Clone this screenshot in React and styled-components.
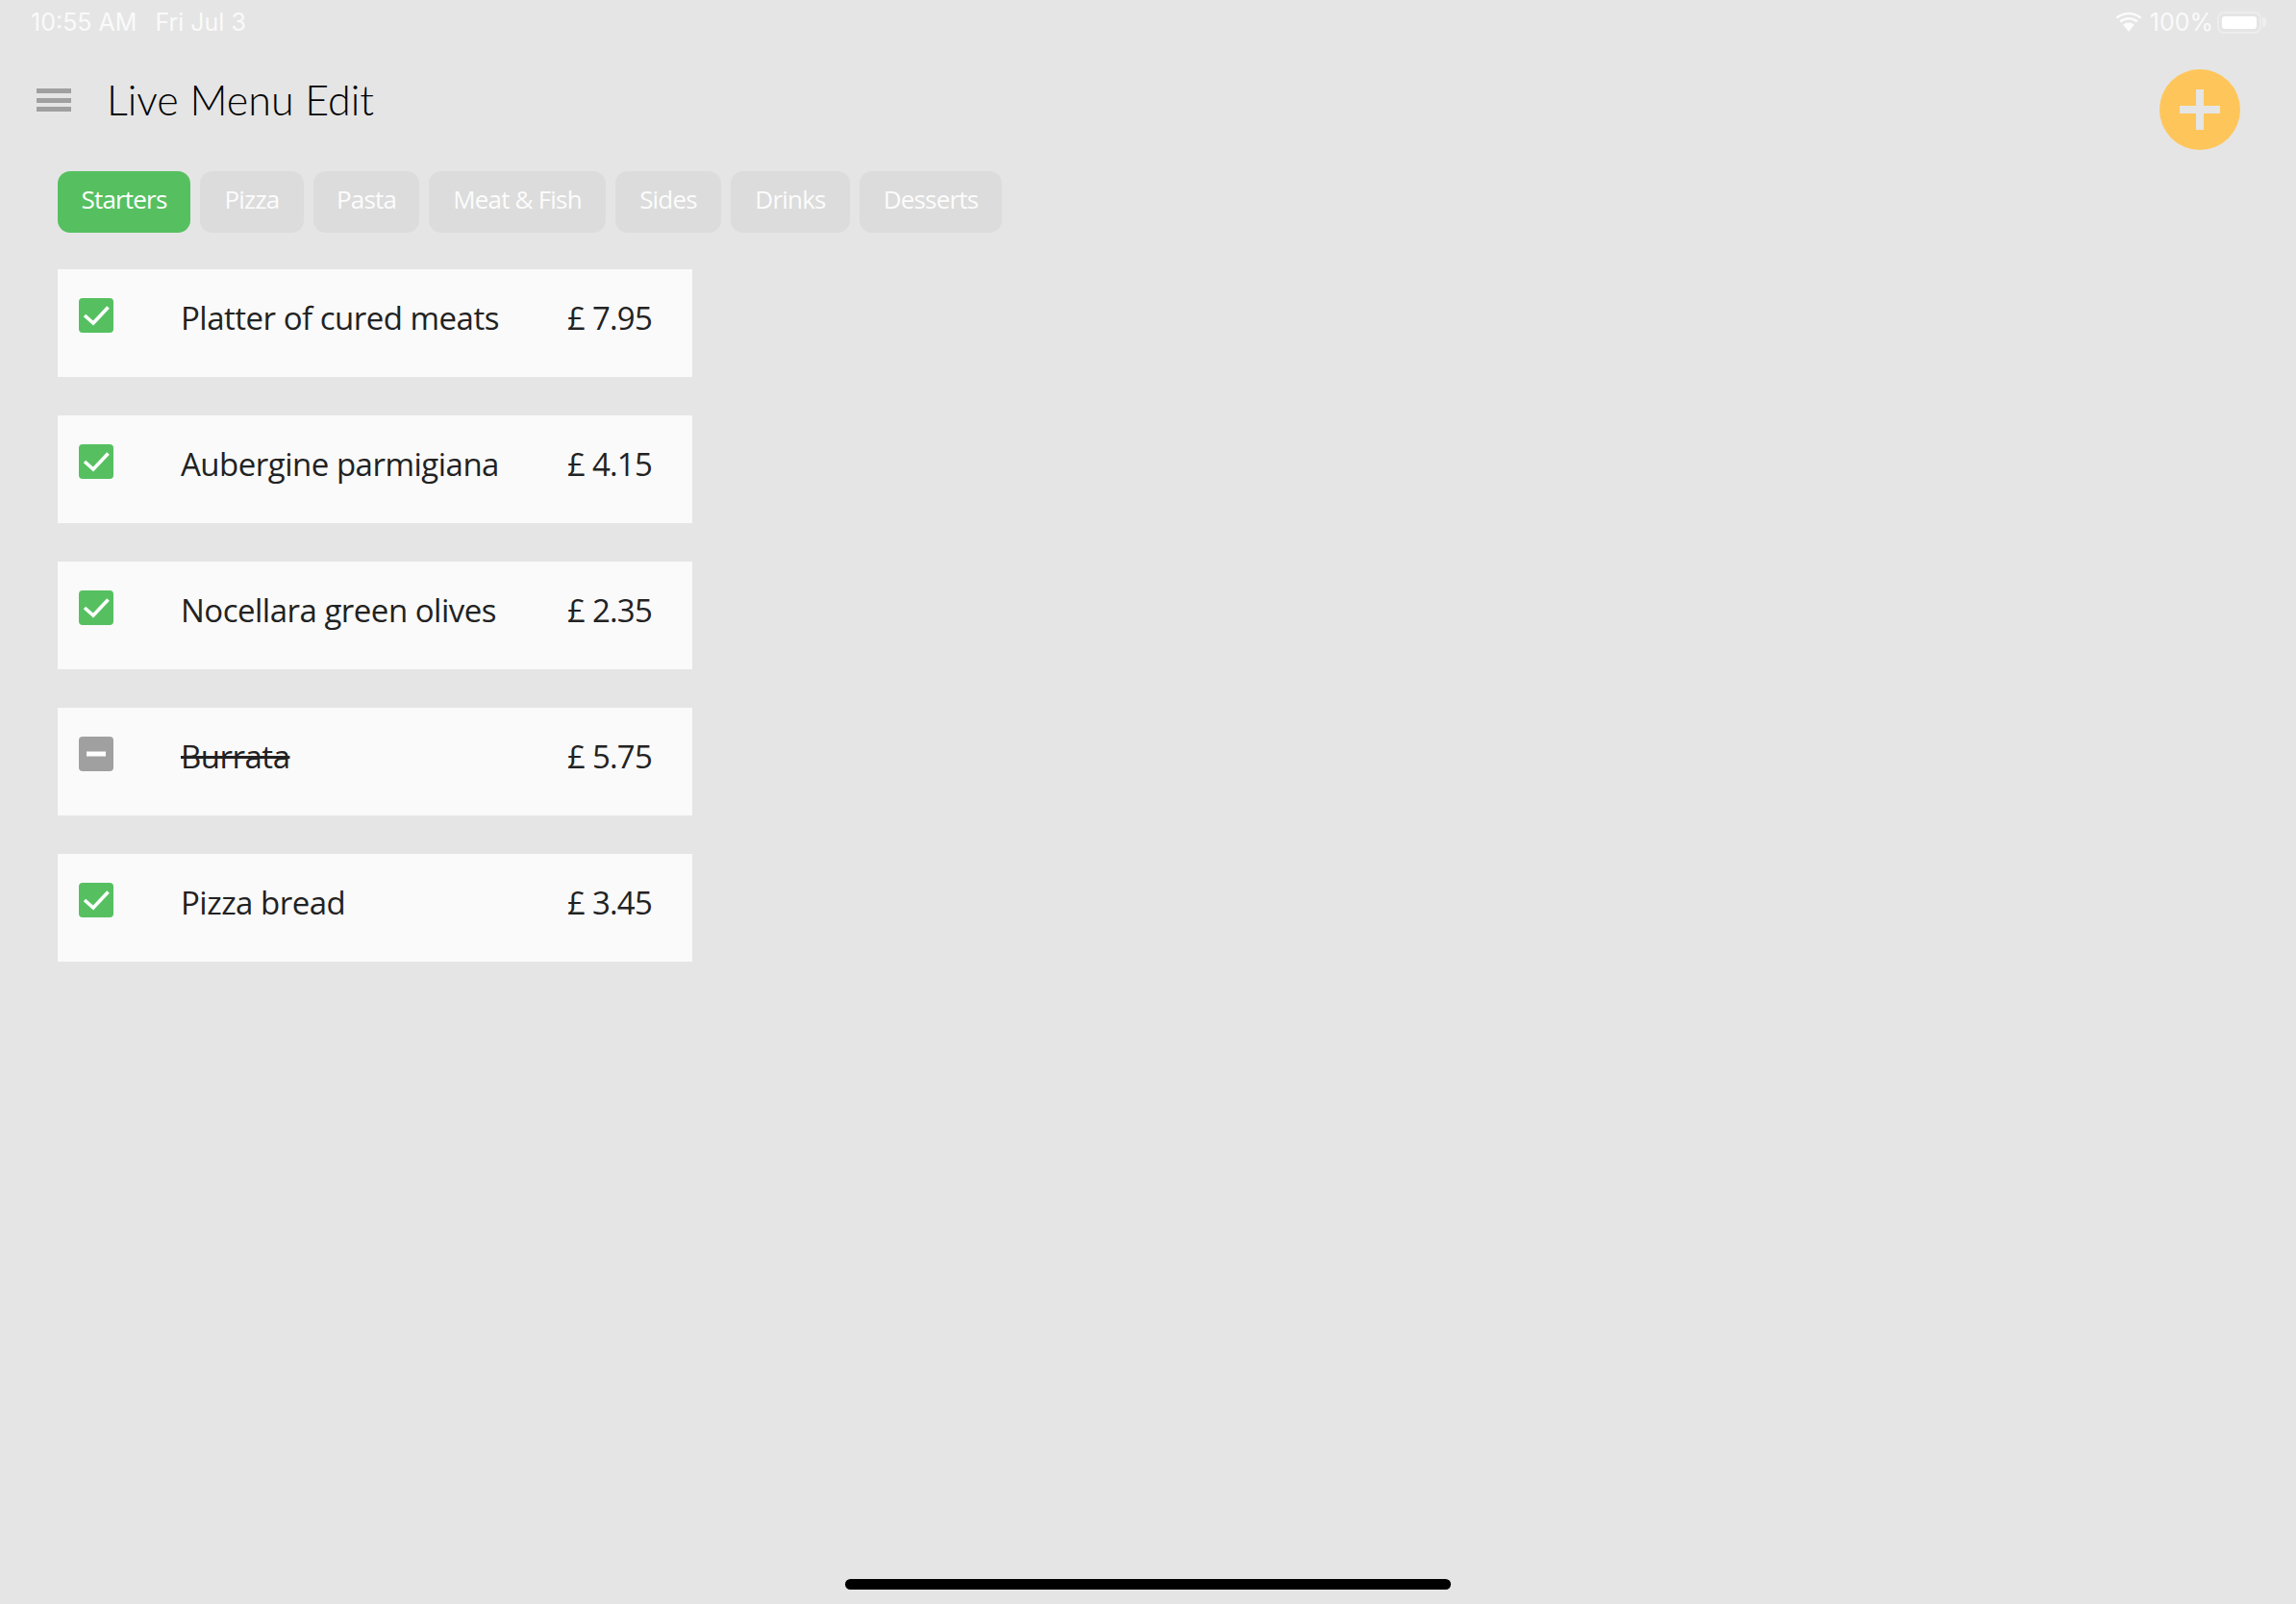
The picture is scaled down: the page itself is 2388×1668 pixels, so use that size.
import React from 'react';
import styled, { createGlobalStyle } from 'styled-components';

const GlobalStyle = createGlobalStyle`
  html, body { margin: 0; padding: 0; background: #e5e5e5; }
  * { box-sizing: border-box; }
`

const Page = styled.div`
  width: 2388px;
  height: 1668px;
  display: flex;
  flex-direction: column;
  background: #e5e5e5;
  overflow: hidden;
  font-family: "Open Sans", "Liberation Sans", sans-serif;
`
const StatusBar = styled.div`
  height: 46px;
  padding: 0 36px 0 32px;
  display: flex;
  align-items: center;
  justify-content: space-between;
  color: rgba(255,255,255,.85);
  font-family: "Inter", "Liberation Sans", sans-serif;
  font-size: 25px;
`
const StatusGroup = styled.div`
  display: flex;
  align-items: center;
  gap: ${(p) => p.$gap}px;
`
const Battery = styled.div`
  width: 46px;
  height: 23px;
  margin-left: -4px;
  padding: 3px;
  border: 2px solid rgba(255,255,255,.3);
  border-radius: 7px;
  position: relative;
  &::before {
    content: '';
    display: block;
    height: 100%;
    border-radius: 3px;
    background: #fff;
  }
  &::after {
    content: '';
    position: absolute;
    left: 45px;
    top: 4px;
    width: 4px;
    height: 10px;
    border-radius: 0 4px 4px 0;
    background: rgba(255,255,255,.4);
  }
`
const Header = styled.header`
  height: 132px;
  padding: 0 58px 0 38px;
  display: flex;
  align-items: flex-start;
  justify-content: space-between;
`
const HeaderLeft = styled.div`
  display: flex;
  align-items: center;
  gap: 37px;
  margin-top: 33px;
`
const MenuIcon = styled.div`
  width: 36px;
  height: 24px;
  display: flex;
  flex-direction: column;
  justify-content: space-between;
`
const MenuBar = styled.span`
  display: block;
  height: 5px;
  background: #a0a0a0;
`
const Title = styled.h1`
  margin: 0;
  font-family: "Lato", "Open Sans", sans-serif;
  font-weight: 300;
  font-size: 43px;
  line-height: 50px;
  color: #000;
`
const AddButton = styled.button`
  width: 84px;
  height: 84px;
  margin-top: 26px;
  padding: 0;
  border: none;
  border-radius: 50%;
  background: #fec65a;
  display: flex;
  align-items: center;
  justify-content: center;
`
const Tabs = styled.nav`
  display: flex;
  gap: 10px;
  padding-left: 60px;
`
const Tab = styled.div`
  width: ${(p) => p.$width}px;
  height: 64px;
  padding-bottom: 6px;
  display: flex;
  align-items: center;
  justify-content: center;
  border-radius: 13px;
  background: ${(p) => (p.$active ? '#56c061' : '#dcdcdc')};
  color: ${(p) => (p.$active ? '#fff' : 'rgba(255,255,255,.95)')};
  font-size: 26px;
  font-weight: 500;
  letter-spacing: -0.8px;
`
const List = styled.div`
  margin-top: 38px;
  padding-left: 60px;
  display: flex;
  flex-direction: column;
  gap: 40px;
`
const Row = styled.div`
  width: 660px;
  height: 112px;
  padding: 30px 42px 0 22px;
  display: flex;
  align-items: flex-start;
  background: #fafafa;
  color: #222;
  font-size: 33px;
  letter-spacing: -0.5px;
`
const CheckBox = styled.div`
  width: 36px;
  height: 36px;
  flex: none;
  border-radius: 4px;
  background: ${(p) => (p.$on ? '#56c061' : '#a0a0a0')};
  display: flex;
  align-items: center;
  justify-content: center;
`
const ItemName = styled.div`
  flex: 1;
  margin: -1px 0 0 70px;
  line-height: 44px;
  text-decoration: ${(p) => (p.$off ? 'line-through' : 'none')};
`
const ItemPrice = styled.div`
  margin-top: -1px;
  line-height: 44px;
  letter-spacing: -0.8px;
`
const HomeBar = styled.div`
  width: 630px;
  height: 11px;
  margin: auto auto 15px;
  border-radius: 6px;
  background: #000;
`

const TABS = [
  { label: 'Starters', width: 138, active: true },
  { label: 'Pizza', width: 108 },
  { label: 'Pasta', width: 110 },
  { label: 'Meat & Fish', width: 184 },
  { label: 'Sides', width: 110 },
  { label: 'Drinks', width: 124 },
  { label: 'Desserts', width: 148 },
]

const ITEMS = [
  { name: 'Platter of cured meats', price: '£ 7.95', on: true },
  { name: 'Aubergine parmigiana', price: '£ 4.15', on: true },
  { name: 'Nocellara green olives', price: '£ 2.35', on: true },
  { name: 'Burrata', price: '£ 5.75', on: false },
  { name: 'Pizza bread', price: '£ 3.45', on: true },
]

const WifiIcon = () => (
  <svg width="28" height="20" viewBox="0 0 28 20" fill="#fff" opacity=".9">
    <path d="M14 2.200c4.800 0 8.600 1.600 11.800 4.400l1.600-1.800C23.800 1.600 19.200 0 14 0S4.200 1.600.6 4.800l1.600 1.800C5.400 3.800 9.200 2.200 14 2.200z" />
    <path d="M14 7.400c3.200 0 5.800 1.100 8 3l1.700-1.800C21 6.200 17.800 5 14 5S7 6.200 4.300 8.600L6 10.400c2.200-1.900 4.800-3 8-3z" />
    <path d="M14 10.500c-2.400 0-4.300.8-5.900 2.200L14 20l5.900-7.300c-1.600-1.400-3.500-2.200-5.900-2.200z" />
  </svg>
)

const CheckMark = () => (
  <svg width="36" height="36" viewBox="0 0 36 36" fill="none" stroke="#fff" strokeWidth="3.6">
    <path d="M6 18l9 8L30.500 9.500" />
  </svg>
)

const MinusMark = () => (
  <svg width="20" height="6" viewBox="0 0 20 6" fill="#fff">
    <rect width="20" height="5" y=".5" />
  </svg>
)

const PlusMark = () => (
  <svg width="42" height="42" viewBox="0 0 42 42" fill="#e5e5e5">
    <path d="M17 0h8v17h17v8H25v17h-8V25H0v-8h17z" />
  </svg>
)

const App = () => {
  return (
    <Page>
      <GlobalStyle />
      <StatusBar>
        <StatusGroup $gap={19}>
          <span>10:55 AM</span>
          <span>Fri Jul 3</span>
        </StatusGroup>
        <StatusGroup $gap={8}>
          <WifiIcon />
          <span>100%</span>
          <Battery />
        </StatusGroup>
      </StatusBar>
      <Header>
        <HeaderLeft>
          <MenuIcon>
            <MenuBar />
            <MenuBar />
            <MenuBar />
          </MenuIcon>
          <Title>Live Menu Edit</Title>
        </HeaderLeft>
        <AddButton>
          <PlusMark />
        </AddButton>
      </Header>
      <Tabs>
        {TABS.map((tab) => (
          <Tab key={tab.label} $width={tab.width} $active={tab.active}>
            {tab.label}
          </Tab>
        ))}
      </Tabs>
      <List>
        {ITEMS.map((item) => (
          <Row key={item.name}>
            <CheckBox $on={item.on}>{item.on ? <CheckMark /> : <MinusMark />}</CheckBox>
            <ItemName $off={!item.on}>{item.name}</ItemName>
            <ItemPrice>{item.price}</ItemPrice>
          </Row>
        ))}
      </List>
      <HomeBar />
    </Page>
  )
}

export default App
